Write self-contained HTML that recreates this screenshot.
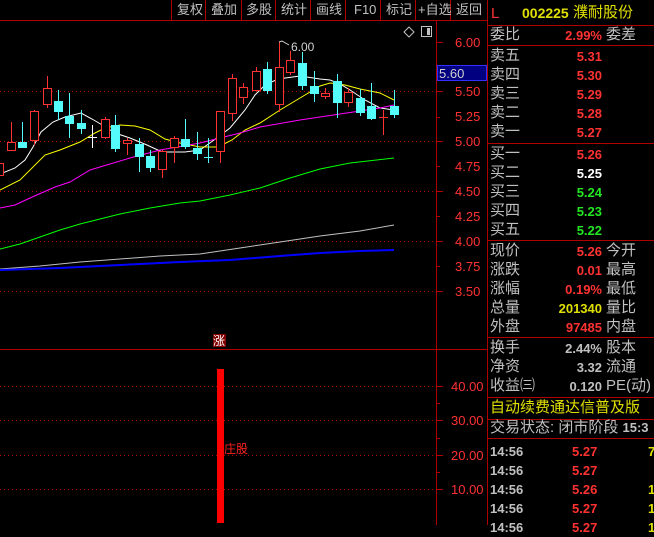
<!DOCTYPE html><html><head><meta charset="utf-8"><style>
body{margin:0;background:#000;width:654px;height:525px;overflow:hidden;position:relative;font-family:"Liberation Sans","Noto Sans CJK SC",sans-serif}
.t{position:absolute;white-space:nowrap;line-height:1}
.g{color:#c0c0c0;font-size:15px}
.n{font-weight:bold;font-size:13px;text-align:right;width:80px}
.r{color:#ff3232}.w{color:#fff}.gr{color:#22e622}.y{color:#e0e000}
.hl{position:absolute;left:487px;width:167px;height:1px;background:#b00000}
</style></head><body>
<svg width="654" height="525" style="position:absolute;left:0;top:0">
<g stroke="#b00000" stroke-width="1">
<line x1="0" y1="20.5" x2="487" y2="20.5"/>
<line x1="436.5" y1="20" x2="436.5" y2="525"/>
<line x1="487.5" y1="0" x2="487.5" y2="525"/>
<line x1="0" y1="349.5" x2="487" y2="349.5"/>
<line x1="171.5" y1="0" x2="171.5" y2="20"/><line x1="205.5" y1="0" x2="205.5" y2="20"/><line x1="241.5" y1="0" x2="241.5" y2="20"/><line x1="275.5" y1="0" x2="275.5" y2="20"/><line x1="310.5" y1="0" x2="310.5" y2="20"/><line x1="345.5" y1="0" x2="345.5" y2="20"/><line x1="380.5" y1="0" x2="380.5" y2="20"/><line x1="415.5" y1="0" x2="415.5" y2="20"/><line x1="450.5" y1="0" x2="450.5" y2="20"/>
</g>
<g stroke="#b00000" stroke-dasharray="1,3">
<line x1="0" y1="91.5" x2="436" y2="91.5"/><line x1="0" y1="141.5" x2="436" y2="141.5"/><line x1="0" y1="191.5" x2="436" y2="191.5"/><line x1="0" y1="241.5" x2="436" y2="241.5"/><line x1="0" y1="291.5" x2="436" y2="291.5"/>
<line x1="0" y1="386.5" x2="436" y2="386.5"/><line x1="0" y1="420.5" x2="436" y2="420.5"/><line x1="0" y1="455.5" x2="436" y2="455.5"/><line x1="0" y1="489.5" x2="436" y2="489.5"/>
</g>
<g stroke="#b00000">
<line x1="436" y1="42.5" x2="443" y2="42.5"/><line x1="436" y1="66.5" x2="440" y2="66.5"/><line x1="436" y1="91.5" x2="443" y2="91.5"/><line x1="436" y1="117.5" x2="440" y2="117.5"/><line x1="436" y1="141.5" x2="443" y2="141.5"/><line x1="436" y1="166.5" x2="440" y2="166.5"/><line x1="436" y1="191.5" x2="443" y2="191.5"/><line x1="436" y1="216.5" x2="440" y2="216.5"/><line x1="436" y1="241.5" x2="443" y2="241.5"/><line x1="436" y1="266.5" x2="440" y2="266.5"/><line x1="436" y1="291.5" x2="443" y2="291.5"/>
<line x1="436" y1="386.5" x2="443" y2="386.5"/><line x1="436" y1="403.5" x2="440" y2="403.5"/><line x1="436" y1="420.5" x2="443" y2="420.5"/><line x1="436" y1="438.5" x2="440" y2="438.5"/><line x1="436" y1="455.5" x2="443" y2="455.5"/><line x1="436" y1="472.5" x2="440" y2="472.5"/><line x1="436" y1="489.5" x2="443" y2="489.5"/>
</g>
<g fill="#ff3232" font-size="13" font-family="Liberation Sans">
<text x="455" y="47">6.00</text><text x="455" y="96">5.50</text><text x="455" y="121">5.25</text><text x="455" y="146">5.00</text><text x="455" y="171">4.75</text><text x="455" y="196">4.50</text><text x="455" y="221">4.25</text><text x="455" y="246">4.00</text><text x="455" y="271">3.75</text><text x="455" y="296">3.50</text>
<text x="451" y="391">40.00</text><text x="451" y="425">30.00</text><text x="451" y="460">20.00</text><text x="451" y="494">10.00</text>
</g>
<rect x="437.5" y="65.5" width="49" height="15" fill="#000080" stroke="#3030ff"/>
<text x="439" y="78" fill="#d0d0d0" font-size="13" font-family="Liberation Sans">5.60</text>
<g fill="none" stroke-width="1">
<polyline stroke="#fff" points="0,174 15,168 25,160 33,147 41,132 53,122 65,117 81,113 92,119 104,126 115,133 130,138 147,145 162,152 185,152 200,150 214,140 230,128 245,110 255,95 265,85 278,79 300,76 320,79 330,80 340,84 350,90 365,100 380,108 394,110"/>
<polyline stroke="#ffff00" points="0,190 20,180 45,155 60,150 80,142 95,133 105,128 120,125 135,126 150,130 165,139 180,143 200,147 218,147 232,140 245,130 260,123 280,110 300,98 320,86 330,83 345,85 360,89 380,93 394,100"/>
<polyline stroke="#ff00ff" points="0,208 15,205 30,198 55,187 70,182 90,170 130,158 160,150 200,143 240,133 260,127 300,120 340,114 380,108 394,105"/>
<polyline stroke="#00ff00" points="0,249 20,244 40,237 60,230 80,224 120,214 150,208 180,203 200,201 230,195 260,188 290,178 320,169 350,163 394,158"/>
<polyline stroke="#c0c0c0" points="0,269 40,266 80,262 120,259 160,256 200,254 240,248 280,242 320,236 360,231 394,225"/>
<polyline stroke="#0000ff" stroke-width="2" points="0,270 60,268 100,266 140,264 180,262 230,260 280,256 320,253 360,251 394,250"/>
</g>
<g stroke-width="1">
<!-- red hollow: x,top,bot,hi,lo -->
<g stroke="#ff3232" fill="#000">
<line x1="11.5" y1="122" x2="11.5" y2="150"/><rect x="7.5" y="142.5" width="8" height="8"/>
<line x1="34.5" y1="110" x2="34.5" y2="145"/><rect x="30.5" y="111.5" width="8" height="29"/>
<line x1="47.5" y1="76" x2="47.5" y2="108"/><rect x="43.5" y="88.5" width="8" height="16"/>
<line x1="105.5" y1="117" x2="105.5" y2="139"/><rect x="101.5" y="119.5" width="8" height="18"/>
<line x1="127.5" y1="138" x2="127.5" y2="155"/><rect x="123.5" y="140.5" width="8" height="3"/>
<line x1="162.5" y1="150" x2="162.5" y2="178"/><rect x="158.5" y="151.5" width="8" height="18"/>
<line x1="174.5" y1="136" x2="174.5" y2="163"/><rect x="170.5" y="138.5" width="8" height="9"/>
<line x1="220.5" y1="111" x2="220.5" y2="163"/><rect x="216.5" y="111.5" width="8" height="40"/>
<line x1="232.5" y1="74" x2="232.5" y2="121"/><rect x="228.5" y="78.5" width="8" height="35"/>
<line x1="243.5" y1="83" x2="243.5" y2="104"/><rect x="239.5" y="87.5" width="8" height="10"/>
<line x1="256.5" y1="67" x2="256.5" y2="91"/><rect x="252.5" y="71.5" width="8" height="19"/>
<line x1="279.5" y1="42" x2="279.5" y2="112"/><rect x="275.5" y="67.5" width="8" height="37"/>
<line x1="290.5" y1="51" x2="290.5" y2="75"/><rect x="286.5" y="60.5" width="8" height="12"/>
<line x1="325.5" y1="88" x2="325.5" y2="99"/><rect x="321.5" y="93.5" width="8" height="3"/>
<line x1="348.5" y1="88" x2="348.5" y2="107"/><rect x="344.5" y="92.5" width="8" height="10"/>
<line x1="383.5" y1="110" x2="383.5" y2="135"/><line x1="379" y1="117.5" x2="388" y2="117.5"/>
<rect x="-4.5" y="163.5" width="8" height="12"/>
</g>
<g stroke="#54fcfc" fill="#54fcfc">
<line x1="22.5" y1="122" x2="22.5" y2="147"/><rect x="18.5" y="142.5" width="8" height="5"/>
<line x1="58.5" y1="90" x2="58.5" y2="120"/><rect x="54.5" y="101.5" width="8" height="10"/>
<line x1="69.5" y1="93" x2="69.5" y2="138"/><rect x="65.5" y="116.5" width="8" height="7"/>
<line x1="81.5" y1="110" x2="81.5" y2="134"/><rect x="77.5" y="123.5" width="8" height="5"/>
<line x1="115.5" y1="115" x2="115.5" y2="152"/><rect x="111.5" y="125.5" width="8" height="23"/>
<line x1="139.5" y1="138" x2="139.5" y2="172"/><rect x="135.5" y="144.5" width="8" height="12"/>
<line x1="150.5" y1="150" x2="150.5" y2="172"/><rect x="146.5" y="156.5" width="8" height="11"/>
<line x1="185.5" y1="119" x2="185.5" y2="149"/><rect x="181.5" y="139.5" width="8" height="7"/>
<line x1="197.5" y1="132" x2="197.5" y2="160"/><rect x="193.5" y="148.5" width="8" height="5"/>
<line x1="208.5" y1="138" x2="208.5" y2="163"/><line x1="204" y1="157.5" x2="213" y2="157.5"/>
<line x1="267.5" y1="62" x2="267.5" y2="94"/><rect x="263.5" y="69.5" width="8" height="21"/>
<line x1="302.5" y1="52" x2="302.5" y2="90"/><rect x="298.5" y="63.5" width="8" height="22"/>
<line x1="314.5" y1="71" x2="314.5" y2="102"/><rect x="310.5" y="86.5" width="8" height="7"/>
<line x1="337.5" y1="74" x2="337.5" y2="118"/><rect x="333.5" y="81.5" width="8" height="21"/>
<line x1="360.5" y1="89" x2="360.5" y2="116"/><rect x="356.5" y="98.5" width="8" height="14"/>
<line x1="371.5" y1="83" x2="371.5" y2="120"/><rect x="367.5" y="106.5" width="8" height="12"/>
<line x1="394.5" y1="90" x2="394.5" y2="118"/><rect x="390.5" y="106.5" width="8" height="8"/>
</g>
<line x1="92.5" y1="125" x2="92.5" y2="148" stroke="#fff"/><line x1="88" y1="137.5" x2="97" y2="137.5" stroke="#fff"/>
</g>
<polyline points="279,42 282,41 289,45" stroke="#d0d0d0" fill="none"/>
<text x="291" y="51" fill="#d0d0d0" font-size="12" font-family="Liberation Sans">6.00</text>
<path d="M409 27 L414 32 L409 37 L404 32 Z" stroke="#c0c0c0" fill="none"/>
<rect x="421.5" y="26.5" width="10" height="10" stroke="#c0c0c0" fill="none"/><rect x="427" y="28" width="3" height="7" fill="#c0c0c0"/>
<rect x="213" y="334" width="13" height="13" fill="#800000"/>
<text x="213" y="345" fill="#fff" font-size="12" font-family="Noto Sans CJK SC">涨</text>
<rect x="217" y="369" width="7" height="154" fill="#ff0000"/>
<text x="224" y="453" fill="#ff2020" font-size="12" font-family="Noto Sans CJK SC">庄股</text>
</svg>
<div class="t" style="top:3px;left:177px;color:#c0c0c0;font-size:13px;word-spacing:0">复权</div>
<div class="t" style="top:3px;left:211px;color:#c0c0c0;font-size:13px">叠加</div>
<div class="t" style="top:3px;left:246px;color:#c0c0c0;font-size:13px">多股</div>
<div class="t" style="top:3px;left:281px;color:#c0c0c0;font-size:13px">统计</div>
<div class="t" style="top:3px;left:316px;color:#c0c0c0;font-size:13px">画线</div>
<div class="t" style="top:3px;left:354px;color:#c0c0c0;font-size:13px">F10</div>
<div class="t" style="top:3px;left:386px;color:#c0c0c0;font-size:13px">标记</div>
<div class="t" style="top:3px;left:418px;color:#c0c0c0;font-size:13px">+自选</div>
<div class="t" style="top:3px;left:456px;color:#c0c0c0;font-size:13px">返回</div>

<div class="t r" style="top:6px;left:491px;font-size:15px">L</div>
<div class="t y" style="top:6px;left:522px;font-size:14px;font-weight:bold">002225</div>
<div class="t y" style="top:5px;left:573px;font-size:15px">濮耐股份</div>
<div class="hl" style="top:25px"></div>
<div class="t g" style="top:27px;left:490px">委比</div><div class="t n r" style="top:29px;left:522px">2.99%</div><div class="t g" style="top:27px;left:606px">委差</div>
<div class="hl" style="top:45px"></div>
<div class="t g" style="top:48px;left:490px">卖五</div><div class="t n r" style="top:50px;left:522px">5.31</div>
<div class="t g" style="top:67px;left:490px">卖四</div><div class="t n r" style="top:69px;left:522px">5.30</div>
<div class="t g" style="top:86px;left:490px">卖三</div><div class="t n r" style="top:88px;left:522px">5.29</div>
<div class="t g" style="top:105px;left:490px">卖二</div><div class="t n r" style="top:107px;left:522px">5.28</div>
<div class="t g" style="top:124px;left:490px">卖一</div><div class="t n r" style="top:126px;left:522px">5.27</div>
<div class="hl" style="top:143px"></div>
<div class="t g" style="top:146px;left:490px">买一</div><div class="t n r" style="top:148px;left:522px">5.26</div>
<div class="t g" style="top:165px;left:490px">买二</div><div class="t n w" style="top:167px;left:522px">5.25</div>
<div class="t g" style="top:184px;left:490px">买三</div><div class="t n gr" style="top:186px;left:522px">5.24</div>
<div class="t g" style="top:203px;left:490px">买四</div><div class="t n gr" style="top:205px;left:522px">5.23</div>
<div class="t g" style="top:222px;left:490px">买五</div><div class="t n gr" style="top:224px;left:522px">5.22</div>
<div class="hl" style="top:240px"></div>
<div class="t g" style="top:243px;left:490px">现价</div><div class="t n r" style="top:245px;left:522px">5.26</div><div class="t g" style="top:243px;left:606px">今开</div>
<div class="t g" style="top:262px;left:490px">涨跌</div><div class="t n r" style="top:264px;left:522px">0.01</div><div class="t g" style="top:262px;left:606px">最高</div>
<div class="t g" style="top:281px;left:490px">涨幅</div><div class="t n r" style="top:283px;left:522px">0.19%</div><div class="t g" style="top:281px;left:606px">最低</div>
<div class="t g" style="top:300px;left:490px">总量</div><div class="t n y" style="top:302px;left:522px">201340</div><div class="t g" style="top:300px;left:606px">量比</div>
<div class="t g" style="top:319px;left:490px">外盘</div><div class="t n r" style="top:321px;left:522px">97485</div><div class="t g" style="top:319px;left:606px">内盘</div>
<div class="hl" style="top:337px"></div>
<div class="t g" style="top:340px;left:490px">换手</div><div class="t n" style="top:342px;left:522px;color:#c0c0c0">2.44%</div><div class="t g" style="top:340px;left:606px">股本</div>
<div class="t g" style="top:359px;left:490px">净资</div><div class="t n" style="top:361px;left:522px;color:#c0c0c0">3.32</div><div class="t g" style="top:359px;left:606px">流通</div>
<div class="t g" style="top:378px;left:490px">收益㈢</div><div class="t n" style="top:380px;left:522px;color:#c0c0c0">0.120</div><div class="t g" style="top:378px;left:606px">PE(动)</div>
<div class="hl" style="top:397px"></div>
<div class="t y" style="top:400px;left:490px;font-size:15px">自动续费通达信普及版</div>
<div class="hl" style="top:419px"></div>
<div class="t g" style="top:420px;left:490px">交易状态: 闭市阶段 <b style="font-size:13px">15:3</b></div>
<div class="hl" style="top:438px"></div>
<div class="t" style="top:442px;left:490px;color:#c0c0c0;font-size:13px;font-weight:bold;line-height:19px">14:56<br>14:56<br>14:56<br>14:56<br>14:56</div>
<div class="t r" style="top:442px;left:572px;font-size:13px;font-weight:bold;line-height:19px">5.27<br>5.27<br>5.26<br>5.27<br>5.27</div>
<div class="t y" style="top:442px;left:648px;font-size:13px;font-weight:bold;line-height:19px">7<br><br>1<br>1<br>1</div>
</body></html>
